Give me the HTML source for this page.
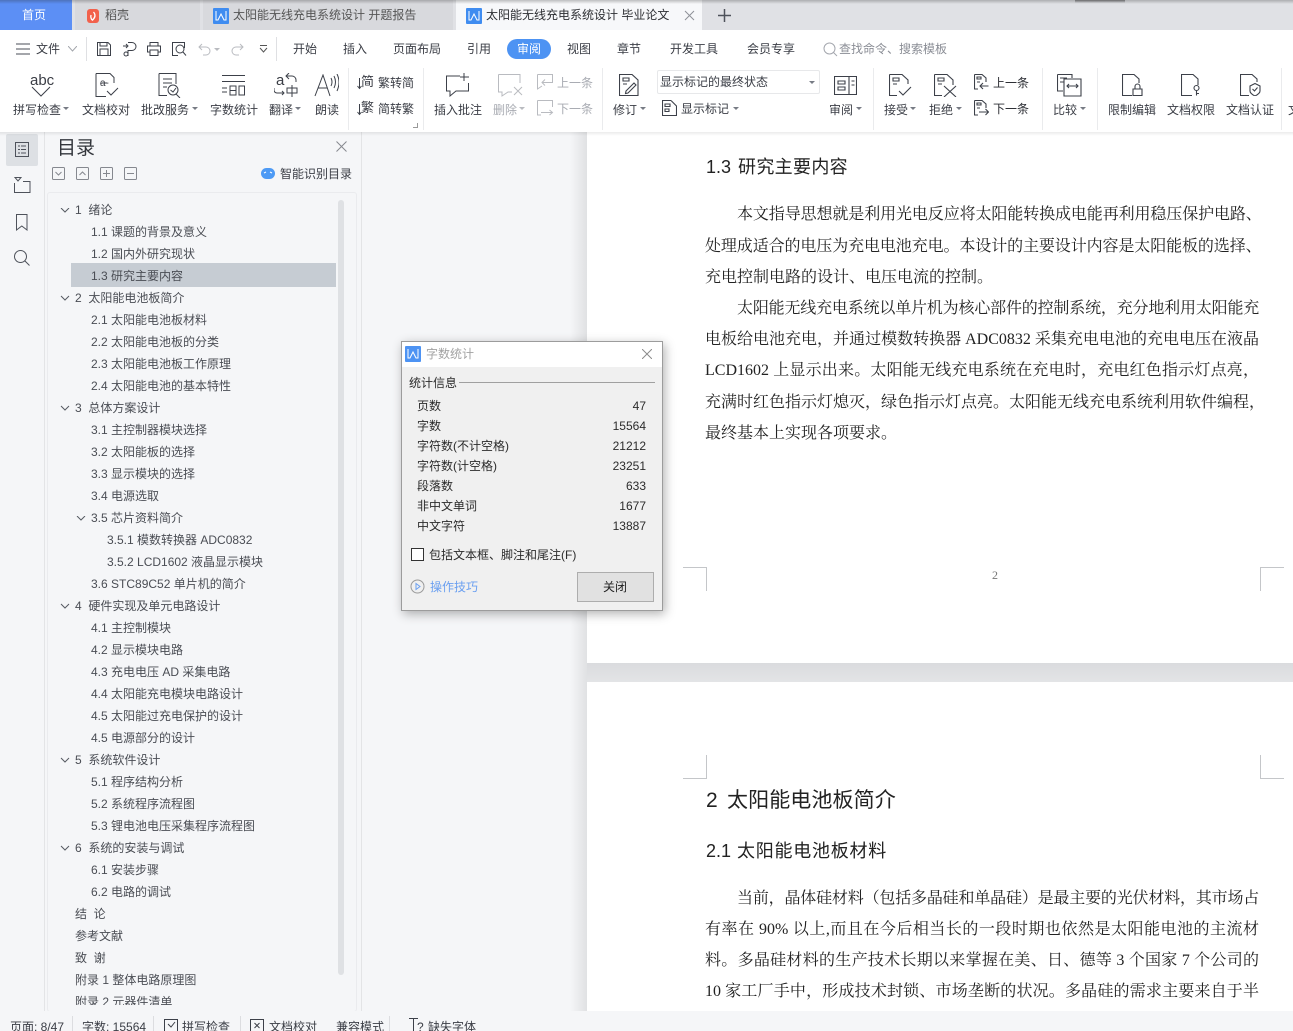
<!DOCTYPE html>
<html lang="zh"><head><meta charset="utf-8"><title>WPS</title>
<style>
html,body{margin:0;padding:0;background:#fff}
#r{position:relative;width:1293px;height:1031px;overflow:hidden;font-family:"Liberation Sans","Noto Sans CJK SC",sans-serif;font-size:12px;color:#3a3d45;background:#f5f6f8}
#r div,#r span.a,#r svg{position:absolute}
.t{position:absolute;white-space:nowrap;line-height:16px}
svg{fill:none;stroke:#3c4049;stroke-width:1}
.g{color:#a8abb2}
.tr{position:absolute;width:0;height:0;border-left:3px solid transparent;border-right:3px solid transparent;border-top:3px solid #777b84}
.sep{position:absolute;width:1px;background:#eaebed}
.toc{position:absolute;white-space:nowrap;line-height:22px;height:22px;font-size:12px;color:#4a4d54;margin-top:1px}
.d{position:absolute;left:705px;width:554px;font-family:"Liberation Serif","Noto Serif CJK SC",serif;font-size:16px;line-height:24px;height:24px;color:#222;white-space:nowrap;text-align:justify;text-align-last:justify}
.e{text-align-last:left}
.h{position:absolute;left:706px;font-family:"Liberation Sans","Noto Sans CJK SC",sans-serif;color:#222;white-space:nowrap}
.crn{position:absolute;background:#c4c6c9}
.row{position:absolute;left:417px;width:229px;height:20px;line-height:20px;color:#2b2b2b}
.row b{font-weight:400;position:absolute;right:0}
</style></head><body><div id="r">

<!-- tab bar -->
<div style="left:0;top:0;width:1293px;height:30px;background:#e0e1e5"></div>
<div style="left:0;top:0;width:72px;height:30px;background:#5c8ff5"></div>
<span class="t" style="left:22px;top:7px;color:#fff;font-size:12px">首页</span>
<div style="left:75px;top:0;width:125px;height:30px;background:#d8d9dd"></div>
<div style="left:87px;top:9px;width:12px;height:14px;background:#f2614c;border-radius:3px"></div>
<svg style="left:87px;top:9px" width="12" height="14"><path d="M6.500 3 C9 6 8 9 5 11.500 M4 6 C3.500 8 4 9.500 5 11" stroke="#fff" stroke-width="1.300"/></svg>
<span class="t" style="left:105px;top:7px;color:#555">稻壳</span>
<div style="left:203px;top:0;width:250px;height:30px;background:#d8d9dd"></div>
<div style="left:213px;top:8px;width:16px;height:16px;background:#3f8cf0;border-radius:1px"></div>
<svg style="left:213px;top:8px" width="16" height="16"><path d="M3 3 V12 H5 L8 6 L11 12 H13 V3" stroke="#fff" stroke-width="1"/></svg>
<span class="t" style="left:233px;top:7px;color:#555">太阳能无线充电系统设计 开题报告</span>
<div style="left:456px;top:0;width:246px;height:30px;background:#f7f8fa"></div>
<div style="left:466px;top:8px;width:16px;height:16px;background:#3f8cf0;border-radius:1px"></div>
<svg style="left:466px;top:8px" width="16" height="16"><path d="M3 3 V12 H5 L8 6 L11 12 H13 V3" stroke="#fff" stroke-width="1"/></svg>
<span class="t" style="left:486px;top:7px;color:#2d2f33">太阳能无线充电系统设计 毕业论文</span>
<svg style="left:684px;top:10px" width="11" height="11"><path d="M1 1 L10 10 M10 1 L1 10" stroke="#8e9198"/></svg>
<svg style="left:718px;top:9px" width="13" height="13"><path d="M6.500 0 V13 M0 6.500 H13" stroke="#4e525b" stroke-width="1.500"/></svg>
<div style="left:0;top:0;width:1293px;height:4px;background:linear-gradient(rgba(40,40,40,.28),rgba(40,40,40,0))"></div>
<div style="left:1075px;top:0;width:50px;height:3px;background:linear-gradient(rgba(40,40,40,.5),rgba(40,40,40,0))"></div>

<!-- ribbon bg -->
<div style="left:0;top:30px;width:1293px;height:102px;background:#fff"></div>

<!-- menu row -->
<svg style="left:16px;top:43px" width="14" height="12"><path d="M0 1 H14 M0 6 H14 M0 11 H14" stroke="#4a4e57"/></svg>
<span class="t" style="left:36px;top:41px">文件</span>
<svg style="left:68px;top:46px" width="9" height="6"><path d="M0 0 L4.500 5 L9 0" stroke="#a2a5ab"/></svg>
<div class="sep" style="left:86px;top:37px;height:24px;background:#dfe0e3"></div>
<svg style="left:97px;top:42px" width="14" height="14"><path d="M.5 .5 H11 L13.500 3 V13.500 H.5 Z M3 13 V7 H11 V13 M3 1 V4 H10 V1"/></svg>
<svg style="left:122px;top:42px" width="15" height="15"><path d="M6 .5 H10 A4 4 0 0 1 10 8.500 H6 V14 M1 4 H5 M4 2 L6 4 L4 6 M2 12 a2 2 0 1 0 4 0 a2 2 0 1 0 -4 0"/></svg>
<svg style="left:147px;top:42px" width="14" height="14"><path d="M3 4 V.5 H11 V4 M3 10 H.5 V4 H13.500 V10 H11 M3 8 H11 V13.500 H3 Z"/></svg>
<svg style="left:172px;top:42px" width="15" height="14"><path d="M12.500 6 V.5 H.5 V13.500 H6 M4 7 a4 4 0 1 0 8 0 a4 4 0 1 0 -8 0 M11 10 L14 13.500"/></svg>
<svg style="left:198px;top:43px" width="13" height="13"><path d="M4 1 L1 4 L4 7 M1 4 H8 A4 4 0 0 1 8 12 H5" stroke="#b9bbc0"/></svg>
<div class="tr" style="left:214px;top:48px;border-top-color:#b9bbc0"></div>
<svg style="left:231px;top:43px" width="13" height="13"><path d="M9 1 L12 4 L9 7 M12 4 H5 A4 4 0 0 0 5 12 H8" stroke="#b9bbc0"/></svg>
<svg style="left:259px;top:45px" width="9" height="9"><path d="M1 .5 H8 M1 3 L4.500 7 L8 3" stroke="#555"/></svg>
<div class="sep" style="left:276px;top:37px;height:24px;background:#dfe0e3"></div>
<span class="t" style="left:293px;top:41px">开始</span>
<span class="t" style="left:343px;top:41px">插入</span>
<span class="t" style="left:393px;top:41px">页面布局</span>
<span class="t" style="left:467px;top:41px">引用</span>
<div style="left:507px;top:39px;width:44px;height:20px;background:#4d93f3;border-radius:10px"></div>
<span class="t" style="left:517px;top:41px;color:#fff">审阅</span>
<span class="t" style="left:567px;top:41px">视图</span>
<span class="t" style="left:617px;top:41px">章节</span>
<span class="t" style="left:670px;top:41px">开发工具</span>
<span class="t" style="left:747px;top:41px">会员专享</span>
<svg style="left:823px;top:42px" width="15" height="15"><path d="M1 6.500 a5.500 5.500 0 1 0 11 0 a5.500 5.500 0 1 0 -11 0 M10.500 10.500 L14 14" stroke="#a4a7ae"/></svg>
<span class="t" style="left:839px;top:41px;color:#8a8d95">查找命令、搜索模板</span>

<!-- ribbon group 1 -->
<span class="t" style="left:30px;top:73px;font-size:15px;line-height:15px">abc</span>
<svg style="left:31px;top:86px" width="20" height="11"><path d="M1 1 L10 10 L19 1"/></svg>
<span class="t" style="left:13px;top:102px">拼写检查</span><div class="tr" style="left:63px;top:107px"></div>
<svg style="left:95px;top:73px" width="24" height="25"><path d="M1 .5 H15 L19 4.500 V10 M1 .5 V23.500 H11 M5 10 H12 M12 18 L16 22 L23 15"/></svg>
<span class="t" style="left:100px;top:79px;font-size:10px;line-height:10px">a-</span>
<span class="t" style="left:82px;top:102px">文档校对</span>
<svg style="left:158px;top:73px" width="24" height="25"><path d="M1 .5 H18 V11 M1 .5 V22.500 H9 M5 6 H14 M5 10 H14 M5 14 H9 M10 17 a5 5 0 1 0 10 0 a5 5 0 1 0 -10 0 M18 21 L22 25 M12.500 17 L15 19 L18 15"/></svg>
<span class="t" style="left:141px;top:102px">批改服务</span><div class="tr" style="left:192px;top:107px"></div>
<svg style="left:222px;top:75px" width="23" height="21"><path d="M0 .5 H23 M0 6.500 H23 M0 13 H5 M0 17 H5 M8 11 H14 V20 H8 Z M8 15.500 H14 M17 11 H22.500 V20 H17 Z"/></svg>
<span class="t" style="left:210px;top:102px">字数统计</span>
<span class="t" style="left:276px;top:73px;font-size:15px;line-height:15px">a</span>
<svg style="left:274px;top:73px" width="24" height="24"><path d="M15 6 L12 3 L15 0 M12 3 H18 A4 4 0 0 1 22 7 V9 M0 15 V17 A3 3 0 0 0 3 20 H10 M8 18 L10 20 L8 22 M13 15 H23 V20 H13 Z M18 12 V24"/></svg>
<span class="t" style="left:269px;top:102px">翻译</span><div class="tr" style="left:295px;top:107px"></div>
<svg style="left:314px;top:74px" width="25" height="23"><path d="M1 22 L9 1 L16 22 M4 14 H13 M17 4 Q19 8 17 12 M20 2 Q23 8 20 14 M23 0 Q27 8 23 17"/></svg>
<span class="t" style="left:315px;top:102px">朗读</span>
<div class="sep" style="left:348px;top:68px;height:62px"></div>
<span class="t" style="left:361px;top:74px;font-size:13px;line-height:16px">简</span>
<svg style="left:357px;top:78px" width="5" height="12"><path d="M2.500 0 V10 M.5 8 L2.500 10.500 L4.500 8"/></svg>
<span class="t" style="left:378px;top:75px">繁转简</span>
<span class="t" style="left:361px;top:100px;font-size:13px;line-height:16px">繁</span>
<svg style="left:357px;top:104px" width="5" height="12"><path d="M2.500 0 V10 M.5 8 L2.500 10.500 L4.500 8"/></svg>
<span class="t" style="left:378px;top:101px">简转繁</span>
<svg style="left:413px;top:123px" width="5" height="5"><path d="M4.500 0 V4.500 H0" stroke="#999"/></svg>
<div class="sep" style="left:423px;top:68px;height:62px"></div>

<!-- comments -->
<svg style="left:446px;top:73px" width="25" height="24"><path d="M14 3 H.5 V18 H4 V23 L10 18 H22.500 V10 M18 0 V8 M14 4 H23"/></svg>
<span class="t" style="left:434px;top:102px">插入批注</span>
<svg style="left:498px;top:74px" width="26" height="23"><path d="M.5 .5 H22 V9 M.5 .5 V18 H4 V22 L10 18 H14 M16 13 L24 21 M24 13 L16 21" stroke="#b9bbc0"/></svg>
<span class="t g" style="left:493px;top:102px">删除</span><div class="tr" style="left:519px;top:107px;border-top-color:#b9bbc0"></div>
<svg style="left:537px;top:74px" width="17" height="16"><path d="M.5 .5 H15.500 V9 M.5 .5 V15 L5 12 M15 8.500 H5 M8 5.500 L5 8.500 L8 11.500" stroke="#b9bbc0"/></svg>
<span class="t g" style="left:557px;top:75px">上一条</span>
<svg style="left:537px;top:100px" width="17" height="16"><path d="M.5 .5 H15.500 V7 M.5 .5 V15 H4 M4 12.500 H15 M12.500 10 L15.500 12.500 L12.500 15" stroke="#b9bbc0"/></svg>
<span class="t g" style="left:557px;top:101px">下一条</span>
<div class="sep" style="left:602px;top:68px;height:62px"></div>

<!-- tracking -->
<svg style="left:619px;top:74px" width="20" height="22"><path d="M.5 .5 H13 L19 6 V21.500 H.5 Z M4 4 H10 V7 H4 Z M4 10 H8 M7 17 L15 9 L17 11 L9 19 L6.500 19.500 Z" stroke-width="1.100"/></svg>
<span class="t" style="left:613px;top:102px">修订</span><div class="tr" style="left:640px;top:107px"></div>
<div style="left:657px;top:70px;width:161px;height:22px;border:1px solid #e7e8ea;border-radius:2px"></div>
<span class="t" style="left:660px;top:74px">显示标记的最终状态</span>
<div class="tr" style="left:809px;top:81px"></div>
<svg style="left:662px;top:100px" width="15" height="16"><path d="M9 .5 H.5 V15.500 H14.500 V6 L9 .5 M3 4 H8 V6.500 H3 Z M3 9 H7 V11.500 H3 Z" stroke-width="1.100"/></svg>
<span class="t" style="left:681px;top:101px">显示标记</span><div class="tr" style="left:733px;top:107px"></div>
<svg style="left:834px;top:76px" width="23" height="19"><path d="M.5 .5 H22.500 V18.500 H.5 Z M15 .5 V18.500 M4 5 H11 V8 H4 Z M4 11 H11 V14 H4 Z M17.500 5 H20.500 M17.500 9 H20.500" stroke-width="1.100"/></svg>
<span class="t" style="left:829px;top:102px">审阅</span><div class="tr" style="left:856px;top:107px"></div>
<div class="sep" style="left:873px;top:68px;height:62px"></div>
<svg style="left:889px;top:74px" width="23" height="23"><path d="M.5 .5 H13 L19 6 V10 M.5 .5 V21.500 H8 M4 4 H10 V7 H4 Z M4 10 H8 M10 17 L14 21 L22 13" stroke-width="1.100"/></svg>
<span class="t" style="left:884px;top:102px">接受</span><div class="tr" style="left:910px;top:107px"></div>
<svg style="left:934px;top:74px" width="23" height="23"><path d="M.5 .5 H13 L19 6 V11 M.5 .5 V21.500 H8 M4 4 H10 V7 H4 Z M4 10 H8 M10 12 L22 23 M22 12 L10 23" stroke-width="1.100"/></svg>
<span class="t" style="left:929px;top:102px">拒绝</span><div class="tr" style="left:956px;top:107px"></div>
<svg style="left:974px;top:74px" width="15" height="16"><path d="M.5 .5 H8 L12 4 V8 M.5 .5 V15 H4 M3 3 H7 V5 H3 Z M3 8 H6 M14.500 12 H6 M9 9 L6 12 L9 15" stroke-width="1.100"/></svg>
<span class="t" style="left:993px;top:75px;color:#2b2d33">上一条</span>
<svg style="left:974px;top:100px" width="15" height="16"><path d="M.5 .5 H8 L12 4 V8 M.5 .5 V15 H4 M3 3 H7 V5 H3 Z M3 8 H6 M5 12 H14.500 M11.500 9 L14.500 12 L11.500 15" stroke-width="1.100"/></svg>
<span class="t" style="left:993px;top:101px;color:#2b2d33">下一条</span>
<div class="sep" style="left:1042px;top:68px;height:62px"></div>
<svg style="left:1057px;top:74px" width="25" height="23"><path d="M.5 .5 H15 V4 M.5 .5 V17 H6 M3 4 H10 M3 8 H7 M7 5 H24 V22 H7 Z M10 12 H21 M12 10 L10 12 L12 14 M19 10 L21 12 L19 14" stroke-width="1.100"/></svg>
<span class="t" style="left:1053px;top:102px">比较</span><div class="tr" style="left:1080px;top:107px"></div>
<div class="sep" style="left:1097px;top:68px;height:62px"></div>
<svg style="left:1122px;top:74px" width="21" height="22"><path d="M10 21.500 H.5 V.5 H12 L17 5 V9 M11 15 H20 V21.500 H11 Z M13 15 V12.500 A2.500 2.500 0 0 1 18 12.500 V15" stroke-width="1.100"/></svg>
<span class="t" style="left:1108px;top:102px">限制编辑</span>
<svg style="left:1181px;top:74px" width="20" height="22"><path d="M11 21.500 H.5 V.5 H12 L17 5 V11 M13 14 a2.500 2.500 0 1 0 5 0 a2.500 2.500 0 1 0 -5 0 M15.500 16.500 V21.500 M15.500 19.500 H18" stroke-width="1.100"/></svg>
<span class="t" style="left:1167px;top:102px">文档权限</span>
<svg style="left:1240px;top:74px" width="21" height="22"><path d="M9 21.500 H.5 V.5 H12 L17 5 V8 M10 12 L15 9.500 L20 12 V17 C20 19 17 21 15 22 C13 21 10 19 10 17 Z M12.500 15 L14.500 17 L17.500 13.500" stroke-width="1.100"/></svg>
<span class="t" style="left:1226px;top:102px">文档认证</span>
<div class="sep" style="left:1281px;top:68px;height:62px"></div>
<span class="t" style="left:1288px;top:102px">文</span>

<!-- left rail -->
<div style="left:0;top:132px;width:44px;height:879px;background:#f5f6f8;border-right:1px solid #e3e4e6"></div>
<div style="left:6px;top:134px;width:32px;height:32px;background:#dde0e4;border-radius:2px"></div>
<svg style="left:15px;top:142px" width="14" height="15"><path d="M.5 .5 H13.500 V14.500 H.5 Z M3 4 H5 M6 4 H11 M3 7.500 H5 M6 7.500 H11 M3 11 H5 M6 11 H11" stroke="#4e525b"/></svg>
<svg style="left:14px;top:177px" width="17" height="16"><path d="M1 .5 H7 L4 4 Z M.5 6 V15.500 H16 V4.500 H9" stroke="#4e525b"/></svg>
<svg style="left:16px;top:214px" width="12" height="17"><path d="M.5 .5 H11 V16 L5.800 12 L.5 16 Z" stroke="#4e525b"/></svg>
<svg style="left:14px;top:250px" width="16" height="16"><path d="M.5 6.500 a6 6 0 1 0 12 0 a6 6 0 1 0 -12 0 M11 11 L15.500 15.500" stroke="#4e525b"/></svg>

<!-- TOC panel -->
<div style="left:45px;top:132px;width:316px;height:879px;background:#f5f6f8;border-right:1px solid #e3e4e6"></div>
<span class="t" style="left:57px;top:136px;font-size:19px;line-height:26px;color:#33363c">目录</span>
<svg style="left:336px;top:141px" width="11" height="11"><path d="M.5 .5 L10.500 10.500 M10.500 .5 L.5 10.500" stroke="#85888f"/></svg>
<svg style="left:52px;top:167px" width="90" height="14"><g stroke="#85888f"><rect x=".5" y=".5" width="12" height="12" rx="1"/><path d="M3.500 5 L6.500 8 L9.500 5"/><rect x="24.500" y=".5" width="12" height="12" rx="1"/><path d="M27.500 8 L30.500 5 L33.500 8"/><rect x="48.500" y=".5" width="12" height="12" rx="1"/><path d="M51 6.500 H58 M54.500 3 V10"/><rect x="72.500" y=".5" width="12" height="12" rx="1"/><path d="M75 6.500 H82"/></g></svg>
<div style="left:261px;top:168px;width:14px;height:11px;background:#4d9af5;border-radius:7px"></div>
<svg style="left:261px;top:168px" width="14" height="11"><path d="M3 5 L5 4 M11 5 L9 4" stroke="#fff"/></svg>
<span class="t" style="left:280px;top:166px;color:#3a3d45">智能识别目录</span>

<div style="left:47px;top:192px;width:308px;height:818px;background:#f5f6f8;border:1px solid #eaebee;border-radius:3px"></div>
<div style="left:71px;top:263px;width:265px;height:24px;background:#c6ccd3"></div>
<div style="left:338px;top:200px;width:6px;height:775px;background:#dfe1e4;border-radius:3px"></div>

<svg style="left:60px;top:208px" width="10" height="800"><g stroke="#555a62" fill="none"><path d="M1 0 L5 4 L9 0"/><path d="M1 88 L5 92 L9 88"/><path d="M1 198 L5 202 L9 198"/><path d="M1 396 L5 400 L9 396"/><path d="M1 550 L5 554 L9 550"/><path d="M1 638 L5 642 L9 638"/></g></svg>
<svg style="left:76px;top:516px" width="10" height="6"><path d="M1 0 L5 4 L9 0" stroke="#555a62"/></svg>

<span class="toc" style="left:75px;top:198px">1&nbsp; 绪论</span>
<span class="toc" style="left:91px;top:220px">1.1 课题的背景及意义</span>
<span class="toc" style="left:91px;top:242px">1.2 国内外研究现状</span>
<span class="toc" style="left:91px;top:264px">1.3 研究主要内容</span>
<span class="toc" style="left:75px;top:286px">2&nbsp; 太阳能电池板简介</span>
<span class="toc" style="left:91px;top:308px">2.1 太阳能电池板材料</span>
<span class="toc" style="left:91px;top:330px">2.2 太阳能电池板的分类</span>
<span class="toc" style="left:91px;top:352px">2.3 太阳能电池板工作原理</span>
<span class="toc" style="left:91px;top:374px">2.4 太阳能电池的基本特性</span>
<span class="toc" style="left:75px;top:396px">3&nbsp; 总体方案设计</span>
<span class="toc" style="left:91px;top:418px">3.1 主控制器模块选择</span>
<span class="toc" style="left:91px;top:440px">3.2 太阳能板的选择</span>
<span class="toc" style="left:91px;top:462px">3.3 显示模块的选择</span>
<span class="toc" style="left:91px;top:484px">3.4 电源选取</span>
<span class="toc" style="left:91px;top:506px">3.5 芯片资料简介</span>
<span class="toc" style="left:107px;top:528px">3.5.1 模数转换器 ADC0832</span>
<span class="toc" style="left:107px;top:550px">3.5.2 LCD1602 液晶显示模块</span>
<span class="toc" style="left:91px;top:572px">3.6 STC89C52 单片机的简介</span>
<span class="toc" style="left:75px;top:594px">4&nbsp; 硬件实现及单元电路设计</span>
<span class="toc" style="left:91px;top:616px">4.1 主控制模块</span>
<span class="toc" style="left:91px;top:638px">4.2 显示模块电路</span>
<span class="toc" style="left:91px;top:660px">4.3 充电电压 AD 采集电路</span>
<span class="toc" style="left:91px;top:682px">4.4 太阳能充电模块电路设计</span>
<span class="toc" style="left:91px;top:704px">4.5 太阳能过充电保护的设计</span>
<span class="toc" style="left:91px;top:726px">4.5 电源部分的设计</span>
<span class="toc" style="left:75px;top:748px">5&nbsp; 系统软件设计</span>
<span class="toc" style="left:91px;top:770px">5.1 程序结构分析</span>
<span class="toc" style="left:91px;top:792px">5.2 系统程序流程图</span>
<span class="toc" style="left:91px;top:814px">5.3 锂电池电压采集程序流程图</span>
<span class="toc" style="left:75px;top:836px">6&nbsp; 系统的安装与调试</span>
<span class="toc" style="left:91px;top:858px">6.1 安装步骤</span>
<span class="toc" style="left:91px;top:880px">6.2 电路的调试</span>
<span class="toc" style="left:75px;top:902px">结&nbsp; 论</span>
<span class="toc" style="left:75px;top:924px">参考文献</span>
<span class="toc" style="left:75px;top:946px">致&nbsp; 谢</span>
<span class="toc" style="left:75px;top:968px">附录 1 整体电路原理图</span>
<div style="left:75px;top:990px;width:200px;height:15px;overflow:hidden"><span class="toc" style="left:0;top:0">附录 2 元器件清单</span></div>

<!-- doc area -->
<div style="left:362px;top:132px;width:225px;height:879px;background:linear-gradient(90deg,#f5f6f8 0,#f5f6f8 208px,#e0e1e3 225px)"></div>
<div style="left:587px;top:132px;width:706px;height:531px;background:#fff"></div>
<div style="left:587px;top:663px;width:706px;height:19px;background:linear-gradient(#dadbde,#e3e4e6)"></div>
<div style="left:587px;top:682px;width:706px;height:329px;background:#fff"></div>
<div style="left:0;top:132px;width:1293px;height:4px;background:linear-gradient(rgba(0,0,0,.08),rgba(0,0,0,0))"></div>

<div class="h" style="top:154px;font-size:18px;line-height:26px">1.3</div>
<div class="h" style="left:738px;top:154px;font-size:18px;line-height:26px;letter-spacing:.33px">研究主要内容</div>
<div class="d" style="top:203px;text-indent:32px;letter-spacing:-.1px">本文指导思想就是利用光电反应将太阳能转换成电能再利用稳压保护电路、</div>
<div class="d" style="top:235px;letter-spacing:-.1px">处理成适合的电压为充电电池充电。本设计的主要设计内容是太阳能板的选择、</div>
<div class="d e" style="top:266px">充电控制电路的设计、电压电流的控制。</div>
<div class="d" style="top:297px;text-indent:32px;letter-spacing:-.3px">太阳能无线充电系统以单片机为核心部件的控制系统，充分地利用太阳能充</div>
<div class="d" style="top:328px">电板给电池充电，并通过模数转换器 ADC0832 采集充电电池的充电电压在液晶</div>
<div class="d" style="top:359px">LCD1602 上显示出来。太阳能无线充电系统在充电时，充电红色指示灯点亮，</div>
<div class="d" style="top:391px">充满时红色指示灯熄灭，绿色指示灯点亮。太阳能无线充电系统利用软件编程，</div>
<div class="d e" style="top:422px">最终基本上实现各项要求。</div>

<span class="t" style="left:992px;top:567px;font-family:'Liberation Serif',serif;font-size:12px;color:#777">2</span>

<div class="crn" style="left:683px;top:567px;width:23px;height:1px"></div>
<div class="crn" style="left:706px;top:567px;width:1px;height:24px"></div>
<div class="crn" style="left:1260px;top:567px;width:24px;height:1px"></div>
<div class="crn" style="left:1260px;top:567px;width:1px;height:24px"></div>
<div class="crn" style="left:683px;top:778px;width:23px;height:1px"></div>
<div class="crn" style="left:706px;top:755px;width:1px;height:24px"></div>
<div class="crn" style="left:1260px;top:778px;width:24px;height:1px"></div>
<div class="crn" style="left:1260px;top:755px;width:1px;height:24px"></div>

<div class="h" style="top:786px;font-size:21px;line-height:30px">2</div>
<div class="h" style="left:727px;top:786px;font-size:21px;line-height:30px;letter-spacing:.1px">太阳能电池板简介</div>
<div class="h" style="top:838px;font-size:18px;line-height:26px">2.1</div>
<div class="h" style="left:737px;top:838px;font-size:18px;line-height:26px;letter-spacing:.75px">太阳能电池板材料</div>
<div class="d" style="top:887px;text-indent:32px;letter-spacing:-.3px">当前，晶体硅材料（包括多晶硅和单晶硅）是最主要的光伏材料，其市场占</div>
<div class="d" style="top:918px">有率在 90% 以上,而且在今后相当长的一段时期也依然是太阳能电池的主流材</div>
<div class="d" style="top:949px">料。多晶硅材料的生产技术长期以来掌握在美、日、德等 3 个国家 7 个公司的</div>
<div class="d" style="top:980px">10 家工厂手中，形成技术封锁、市场垄断的状况。多晶硅的需求主要来自于半</div>

<!-- status bar -->
<div style="left:0;top:1011px;width:1293px;height:20px;background:#f5f6f8;overflow:hidden">
<span class="t" style="left:10px;top:8px;color:#3a3d45">页面: 8/47</span>
<span class="t" style="left:82px;top:8px">字数: 15564</span>
<div class="sep" style="left:72px;top:5px;height:15px;background:#dcdde0"></div>
<div class="sep" style="left:153px;top:5px;height:15px;background:#dcdde0"></div>
<svg style="left:164px;top:8px" width="14" height="14"><path d="M.5 .5 H13.500 V13.500 H.5 Z M4 5 L7 8 L11 3"/></svg>
<span class="t" style="left:182px;top:8px">拼写检查</span>
<div class="sep" style="left:240px;top:5px;height:15px;background:#dcdde0"></div>
<svg style="left:250px;top:8px" width="14" height="14"><path d="M.5 .5 H13.500 V13.500 H.5 Z M4.500 4 L9.500 9 M9.500 4 L4.500 9"/></svg>
<span class="t" style="left:269px;top:8px">文档校对</span>
<span class="t" style="left:336px;top:8px">兼容模式</span>
<div class="sep" style="left:389px;top:5px;height:15px;background:#dcdde0"></div>
<svg style="left:409px;top:7px" width="18" height="14"><path d="M0 .5 H9 M4.500 .5 V13"/></svg>
<span class="t" style="left:417px;top:8px">?</span>
<span class="t" style="left:428px;top:8px">缺失字体</span>
</div>

<!-- dialog -->
<div style="left:401px;top:341px;width:260px;height:268px;background:#f0f0f0;border:1px solid #9c9c9c;box-shadow:2px 3px 10px rgba(0,0,0,.3)"></div>
<div style="left:402px;top:342px;width:260px;height:25px;background:#fff"></div>
<div style="left:405px;top:346px;width:16px;height:16px;background:#4d93f3;border-radius:1px"></div>
<svg style="left:405px;top:346px" width="16" height="16"><path d="M3 3 V12 H5 L8 6 L11 12 H13 V3" stroke="#fff" stroke-width="1"/></svg>
<span class="t" style="left:426px;top:346px;color:#a2a2a2">字数统计</span>
<svg style="left:642px;top:349px" width="10" height="10"><path d="M0 0 L10 10 M10 0 L0 10" stroke="#8b8b8b"/></svg>
<span class="t" style="left:409px;top:375px;color:#2b2b2b">统计信息</span>
<div style="left:459px;top:382px;width:196px;height:1px;background:#a0a0a0"></div>
<div class="row" style="top:396px">页数<b>47</b></div>
<div class="row" style="top:416px">字数<b>15564</b></div>
<div class="row" style="top:436px">字符数(不计空格)<b>21212</b></div>
<div class="row" style="top:456px">字符数(计空格)<b>23251</b></div>
<div class="row" style="top:476px">段落数<b>633</b></div>
<div class="row" style="top:496px">非中文单词<b>1677</b></div>
<div class="row" style="top:516px">中文字符<b>13887</b></div>
<div style="left:411px;top:548px;width:11px;height:11px;border:1px solid #333;background:#fff"></div>
<span class="t" style="left:429px;top:547px;color:#2b2b2b">包括文本框、脚注和尾注(F)</span>
<svg style="left:410px;top:579px" width="15" height="15"><circle cx="7.500" cy="7.500" r="6.500" stroke="#9a9a9a"/><path d="M6 4.500 L10 7.500 L6 10.500 Z" stroke="#6a9ff0"/></svg>
<span class="t" style="left:430px;top:579px;color:#6a9ff0">操作技巧</span>
<div style="left:577px;top:572px;width:75px;height:28px;background:#e1e1e1;border:1px solid #adadad"></div>
<span class="t" style="left:603px;top:579px;color:#222">关闭</span>

</div></body></html>
